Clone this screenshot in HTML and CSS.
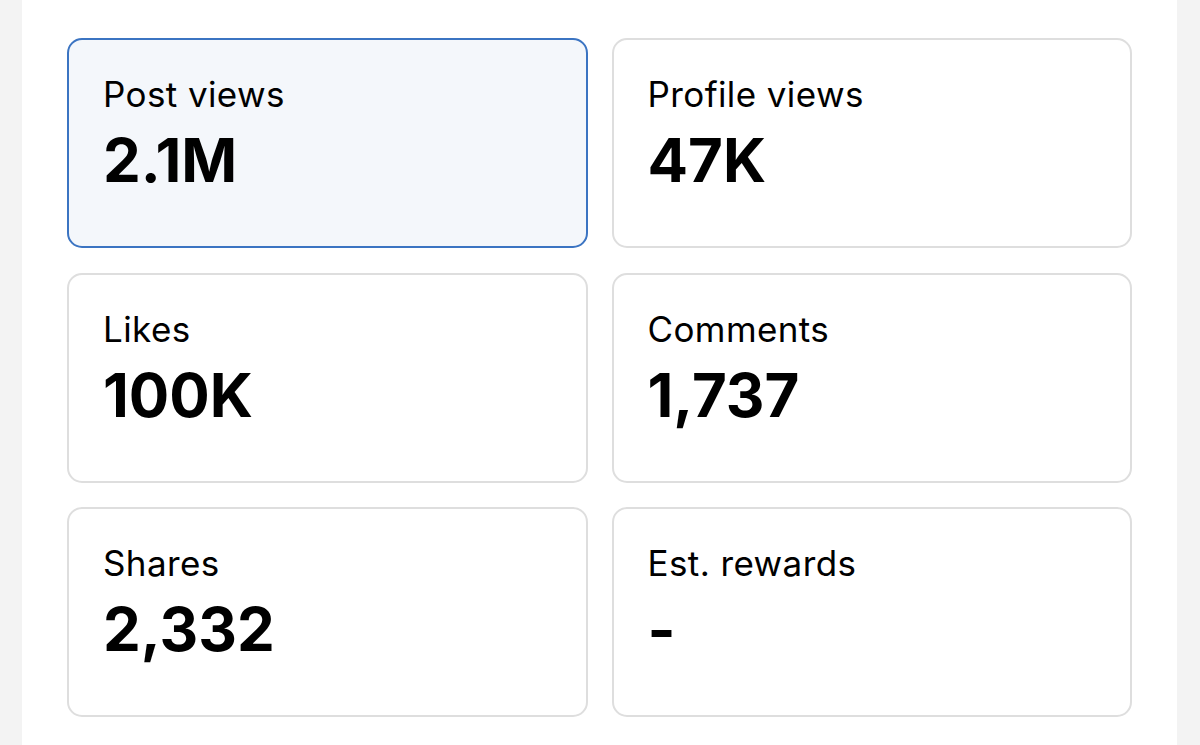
FILE: index.html
```html
<!DOCTYPE html>
<html lang="en">
<head>
<meta charset="utf-8">
<title>Post analytics</title>
<link rel="stylesheet" href="styles.css">
</head>
<body>
<main class="panel">
  <section class="grid">
    <div class="card card--active">
      <div class="label">Post views</div>
      <div class="value">2.1M</div>
    </div>
    <div class="card">
      <div class="label">Profile views</div>
      <div class="value">47K</div>
    </div>
    <div class="card">
      <div class="label">Likes</div>
      <div class="value">100K</div>
    </div>
    <div class="card">
      <div class="label">Comments</div>
      <div class="value">1,737</div>
    </div>
    <div class="card">
      <div class="label">Shares</div>
      <div class="value">2,332</div>
    </div>
    <div class="card">
      <div class="label">Est. rewards</div>
      <div class="value">-</div>
    </div>
  </section>
</main>
</body>
</html>
```
FILE: styles.css
```css
html, body {
  margin: 0;
  padding: 0;
}
body {
  background: #f3f3f3;
  font-family: Inter, "Liberation Sans", Arial, sans-serif;
  color: #000;
  height: 745px;
  overflow: hidden;
}
.panel {
  margin: 0 23px 0 22px;
  background: #fff;
  height: 745px;
  padding: 38px 45px 0 45px;
  box-sizing: border-box;
}
.grid {
  display: grid;
  grid-template-columns: 1fr 1fr;
  grid-auto-rows: 210px;
  column-gap: 24px;
  row-gap: 24.5px;
}
.card {
  border: 2px solid #dedede;
  border-radius: 15px;
  padding: 34px 0 0 34px;
  box-sizing: border-box;
  background: #fff;
}
.card--active {
  border-color: #3b74c2;
  background: #f4f7fb;
}
.label {
  font-size: 35px;
  line-height: 40px;
  font-weight: 400;
  letter-spacing: 0.4px;
}
.value {
  margin-top: 14px;
  font-size: 60px;
  line-height: 64px;
  font-weight: 700;
  letter-spacing: 0;
}
```
